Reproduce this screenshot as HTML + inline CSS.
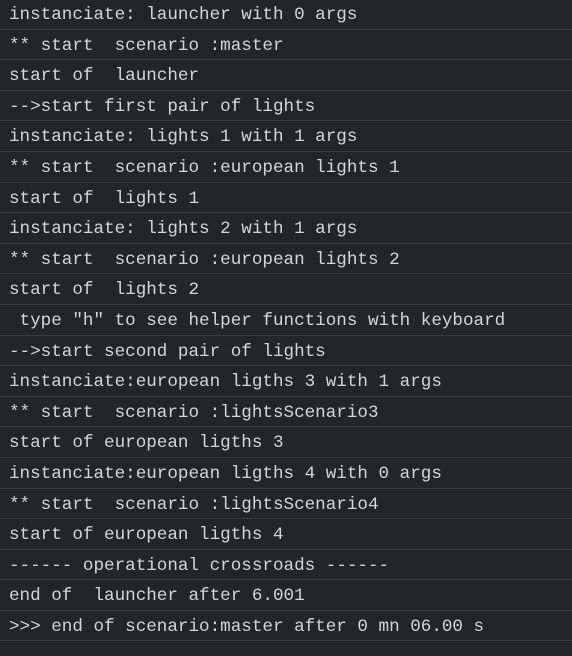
<!DOCTYPE html>
<html><head><style>
html,body{margin:0;padding:0;background:#242528;width:572px;height:656px;overflow:hidden}
.w{position:absolute;top:-1px;left:0;width:572px}
.r{box-sizing:border-box;height:30.6px;border-bottom:1px solid #3b3c3f;color:#d5d5d5;font-family:"Liberation Mono",monospace;font-size:17.6px;line-height:29px;padding-top:2px;padding-left:9px;white-space:pre}
</style></head><body><div class="w">
<div class="r">instanciate: launcher with 0 args</div>
<div class="r">** start  scenario :master</div>
<div class="r">start of  launcher</div>
<div class="r">-->start first pair of lights</div>
<div class="r">instanciate: lights 1 with 1 args</div>
<div class="r">** start  scenario :european lights 1</div>
<div class="r">start of  lights 1</div>
<div class="r">instanciate: lights 2 with 1 args</div>
<div class="r">** start  scenario :european lights 2</div>
<div class="r">start of  lights 2</div>
<div class="r"> type "h" to see helper functions with keyboard</div>
<div class="r">-->start second pair of lights</div>
<div class="r">instanciate:european ligths 3 with 1 args</div>
<div class="r">** start  scenario :lightsScenario3</div>
<div class="r">start of european ligths 3</div>
<div class="r">instanciate:european ligths 4 with 0 args</div>
<div class="r">** start  scenario :lightsScenario4</div>
<div class="r">start of european ligths 4</div>
<div class="r">------ operational crossroads ------</div>
<div class="r">end of  launcher after 6.001</div>
<div class="r">>>> end of scenario:master after 0 mn 06.00 s</div>
</div></body></html>
